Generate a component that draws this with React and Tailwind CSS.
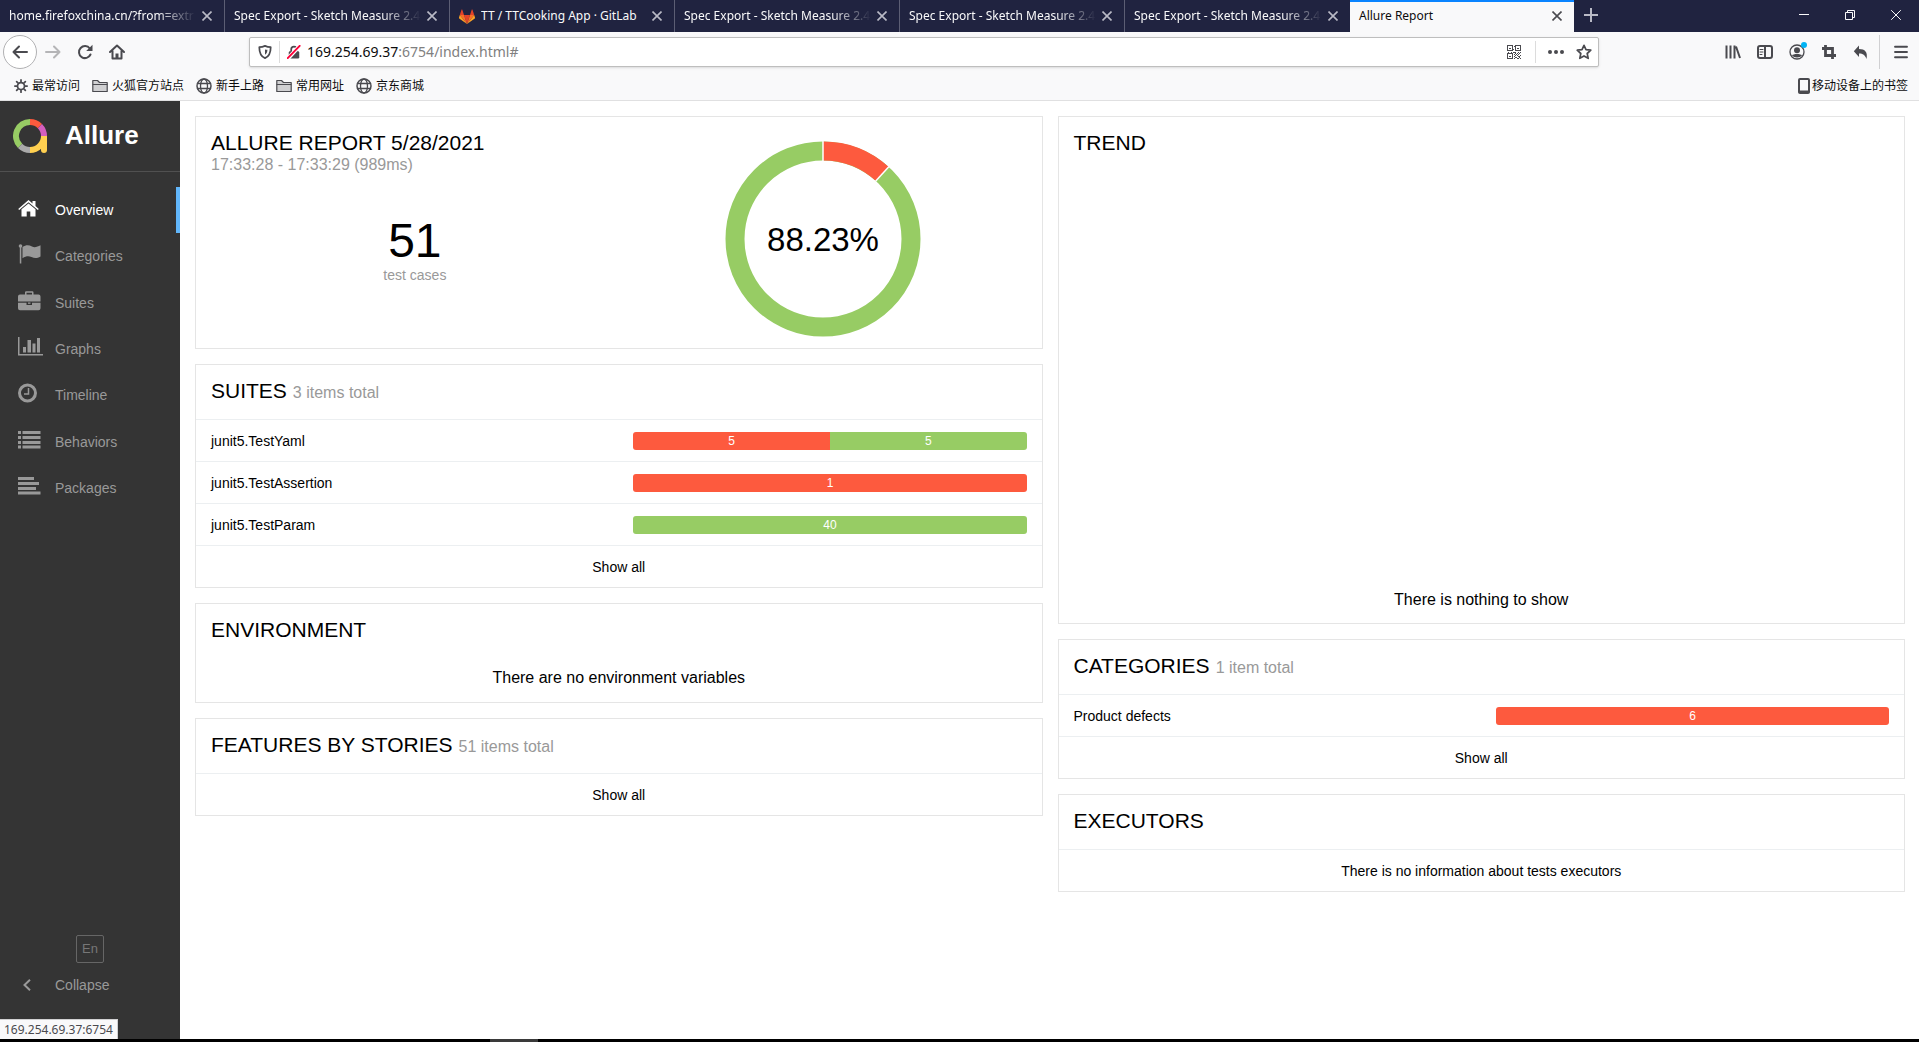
import { Menu } from "lucide-react";

const RED = "bg-[#fd5a3e]";
const GREEN = "bg-[#97cc64]";

/* ---------- browser window ---------- */

function Close({ className }) {
  return (
    <svg width="10" height="10" viewBox="0 0 10 10" className={className} stroke="currentColor" strokeWidth="1.6" fill="none">
      <path d="M0.5 0.5 9.5 9.5M9.5 0.5 0.5 9.5" />
    </svg>
  );
}

function GitLab() {
  return (
    <svg width="16" height="15" viewBox="0 0 16 15" className="shrink-0">
      <path d="M8 15 11 6H5z" fill="#e24329" />
      <path d="M8 15 5 6H0.8z" fill="#fc6d26" />
      <path d="M0.8 6 0 8.6c-.1.3 0 .6.2.8L8 15z" fill="#fca326" />
      <path d="M0.8 6H5L3.2 0.6c-.1-.3-.5-.3-.6 0z" fill="#e24329" />
      <path d="M8 15 11 6h4.200z" fill="#fc6d26" />
      <path d="M15.200 6 16 8.600c.1.3 0 .6-.2.8L8 15z" fill="#fca326" />
      <path d="M15.200 6H11L12.800.6c.1-.3.5-.3.6 0z" fill="#e24329" />
    </svg>
  );
}

const tabs = [
  { title: "home.firefoxchina.cn/?from=extr" },
  { title: "Spec Export - Sketch Measure 2.4" },
  { title: "TT / TTCooking App · GitLab", icon: true },
  { title: "Spec Export - Sketch Measure 2.4" },
  { title: "Spec Export - Sketch Measure 2.4" },
  { title: "Spec Export - Sketch Measure 2.4" },
];

function TabBar() {
  return (
    <div className="flex h-8 bg-[#202340] text-xs text-[#f9f9fa]">
      {tabs.map((t, i) => (
        <div key={i} className={`flex w-[225px] items-center gap-1.5 pl-[9px] pr-3 ${i < 5 ? "border-r border-[#5c5e74]" : ""}`}>
          {t.icon && <GitLab />}
          <button className={`min-w-0 flex-1 overflow-hidden text-left whitespace-nowrap ${t.icon ? "" : "[mask-image:linear-gradient(to_left,transparent,black_40px)]"}`}>{t.title}</button>
          <button aria-label="Close tab" className="text-[#b9bac6]"><Close /></button>
        </div>
      ))}
      <div className="flex w-[224px] items-center border-t-2 border-[#0a84ff] bg-[#f9f9fa] pr-3 pb-0.5 pl-[9px] text-[#0c0c0d]">
        <button className="flex-1 text-left">Allure Report</button>
        <button aria-label="Close tab" className="text-[#4a4a4f]"><Close /></button>
      </div>
      <button aria-label="New tab" className="flex w-[34px] items-center justify-center pb-0.5 text-[#b9bac6]">
        <svg width="14" height="14" viewBox="0 0 14 14" stroke="currentColor" strokeWidth="2"><path d="M7 0V14M0 7H14" /></svg>
      </button>
      <div className="ml-auto flex pb-0.5">
        <button aria-label="Minimize" className="flex w-[46px] items-center justify-center">
          <svg width="10" height="10" viewBox="0 0 10 10" stroke="currentColor"><path d="M0 4.500H10" /></svg>
        </button>
        <button aria-label="Restore" className="flex w-[46px] items-center justify-center">
          <svg width="10" height="10" viewBox="0 0 10 10" stroke="currentColor" fill="none"><path d="M.5 2.500H7.500V9.500H.5zM2.500 2.500V.5H9.500V7.500H7.500" /></svg>
        </button>
        <button aria-label="Close window" className="flex w-[46px] items-center justify-center">
          <svg width="10" height="10" viewBox="0 0 10 10" stroke="currentColor" fill="none"><path d="M.2.2 9.800 9.800M9.800.2.2 9.800" /></svg>
        </button>
      </div>
    </div>
  );
}

function Icon({ children, size = 16, className = "" }) {
  return (
    <svg width={size} height={size} viewBox="0 0 16 16" className={`shrink-0 ${className}`} fill="none" stroke="currentColor" strokeWidth="2" strokeLinecap="round" strokeLinejoin="round">
      {children}
    </svg>
  );
}

function QrCode() {
  return (
    <svg width="14" height="14" viewBox="0 0 14 14" fill="none" stroke="currentColor" shapeRendering="crispEdges">
      <path d="M1.500 .5H5.500V5.500H.5V.5zM8.500 .5H13.500V5.500H8.500zM.5 8.500H5.500V13.500H.5z" />
      <path d="M2 3.500H4M10 3.500H12M2 11.500H4M7 1.500H8M6 4.500H7M6 7.500H9M1 7.500H2M4 7.500H5M11 7.500H12M13 7.500H14M8 8.500H9M10 8.500H11M12 8.500H13M7 9.500H8M9 9.500H10M11 9.500H12M8 10.500H9M10 10.500H11M13 10.500H14M7 11.500H8M11 11.500H13M8 12.500H10M12 12.500H13M7 13.500H8M10 13.500H12M13 13.500H14" />
    </svg>
  );
}

function ToolBar() {
  return (
    <div className="flex h-10 items-center bg-[#f9f9fa] pr-1 pl-[3px] text-[#4a4a4f]">
      <button aria-label="Back" className="flex size-[34px] items-center justify-center rounded-full border border-[#b1b1b3] bg-white">
        <Icon><path d="M15 8H1.500M7 2.500 1.500 8 7 13.500" /></Icon>
      </button>
      <button aria-label="Forward" className="ml-2 text-[#b5b5b7]"><Icon><path d="M1 8H14.500M9 2.500 14.500 8 9 13.500" /></Icon></button>
      <button aria-label="Reload" className="ml-4"><Icon><path d="M13.500 10.500A6 6 0 1 1 12.800 4.500" /><path d="M15.500 .8V7H9.200z" fill="currentColor" stroke="none" /></Icon></button>
      <button aria-label="Home" className="ml-4"><Icon><path d="M1 8 8 1.500 15 8M3.500 7V14.500H12.500V7" /><path d="M8 14V9.500" strokeWidth="3" strokeLinecap="butt" /></Icon></button>
      <div className="ml-[124px] flex h-[30px] w-[1350px] items-center rounded-xs border border-[#bebebe] bg-white shadow-sm">
        <Icon size={14} className="ml-2"><path d="M8 1C10 2 12.500 2.500 14.500 2.500 14.500 9 13 13 8 15 3 13 1.500 9 1.500 2.500 3.500 2.500 6 2 8 1z" /><path d="M8 5C9 5.300 10 5.500 10.800 5.500 10.500 8.500 10 10 8 11z" fill="currentColor" stroke="none" /></Icon>
        <div className="mr-[7px] ml-[7px] h-[22px] w-px bg-[#dcdcdc]" />
        <Icon size={14}><path d="M4.800 7V5A3.200 3.200 0 0 1 11.200 5V7" /><rect x="2" y="7" width="12" height="8.500" rx="1.500" fill="currentColor" stroke="none" /><path d="M1 15.500 14.500 1" stroke="#fff" strokeWidth="4.500" /><path d="M.8 15 14.500 1" stroke="#ff0039" strokeWidth="2.200" /></Icon>
        <div className="relative ml-1.5 flex-1 text-sm">
          <span className="text-[#0c0c0d]">169.254.69.37</span><span className="text-[#808080]">:6754/index.html#</span>
          <input aria-label="Address" className="absolute inset-0 w-full bg-transparent outline-none" />
        </div>
        <QrCode />
        <div className="mr-3 ml-3.5 h-[22px] w-px bg-[#dcdcdc]" />
        <Icon><g fill="currentColor" stroke="none"><circle cx="2" cy="8" r="2" /><circle cx="8" cy="8" r="2" /><circle cx="14" cy="8" r="2" /></g></Icon>
        <Icon className="mr-1.5 ml-3"><path d="M8 1.300 10 5.700 14.800 6.200 11.200 9.500 12.200 14.300 8 11.900 3.800 14.300 4.800 9.500 1.200 6.200 6 5.700z" strokeWidth="1.700" /></Icon>
      </div>
      <div className="ml-auto flex items-center">
        <div className="flex gap-4">
          <button aria-label="Library"><Icon><path d="M1.500 1.500V14.500M5.500 1.500V14.500M9.500 1.500V14.500M11 2.500 15 14" strokeLinecap="butt" /></Icon></button>
          <button aria-label="Sidebar"><Icon><rect x="1" y="2" width="14" height="12" rx="2" /><path d="M8 2V14" /><path d="M3 5.500H6M3 8H6M3 10.500H5" strokeWidth="1" /></Icon></button>
          <button aria-label="Account" className="relative">
            <Icon><circle cx="8" cy="8" r="7" strokeWidth="1.300" /><circle cx="8" cy="6.200" r="3" fill="currentColor" stroke="none" /><path d="M3 11.500C4 9.500 12 9.500 13 11.500 11 14 5 14 3 11.500z" fill="currentColor" stroke="none" /></Icon>
            <span className="absolute -top-0.5 -right-0.5 size-1.5 rounded-full bg-[#00b3f4]" />
          </button>
          <button aria-label="Screenshot"><Icon><path d="M4.500 1V11.500H15M1 4.500H11.500V15" strokeWidth="2.800" strokeLinecap="butt" strokeLinejoin="miter" /></Icon></button>
          <button aria-label="Undo"><Icon><path d="M6 1.500V5C12 5 15 8 13.500 15 12 11 10 9.500 6 9.500V13L.8 7.200z" fill="currentColor" stroke="none" /></Icon></button>
        </div>
        <div className="mr-3 ml-2.5 h-[34px] w-px bg-[#d0d0d2]" />
        <button aria-label="Menu" className="pr-[5px]"><Menu size={18} strokeWidth={2.500} /></button>
      </div>
    </div>
  );
}

function Gear() {
  return <Icon size={14}><circle cx="8" cy="8" r="4" /><path d="M8 1V3M8 13V15M1 8H3M13 8H15M3 3 4.500 4.500M11.500 11.500 13 13M13 3 11.500 4.500M4.500 11.500 3 13" /></Icon>;
}
function Folder() {
  return <Icon><path d="M.8 13.500V2.500H5.500L7.500 4.500H15.200V13.500z" fill="#d0d0d2" strokeWidth="1.200" /><path d="M1 6.500H15" strokeWidth="1" /></Icon>;
}
function Globe() {
  return <Icon><circle cx="8" cy="8" r="7" strokeWidth="1.500" /><ellipse cx="8" cy="8" rx="3.500" ry="7" strokeWidth="1.300" /><path d="M1.500 5.500H14.500M1.500 10.500H14.500" strokeWidth="1.300" /></Icon>;
}

const bookmarks = [
  ["最常访问", Gear],
  ["火狐官方站点", Folder],
  ["新手上路", Globe],
  ["常用网址", Folder],
  ["京东商城", Globe],
];

function BookmarkBar() {
  return (
    <div className="flex h-[29px] items-center gap-3 border-b border-[#e0e0e1] bg-[#f9f9fa] pr-[11px] pl-3.5 text-xs text-[#0c0c0d]">
      {bookmarks.map(([name, I]) => (
        <button key={name} className="flex items-center gap-1"><span className="text-[#4a4a4f]"><I /></span>{name}</button>
      ))}
      <button className="ml-auto flex items-center">
        <Icon className="text-[#4a4a4f]"><rect x="3" y="1" width="10" height="14" rx="1" /><path d="M3 13.500H13" /></Icon>
        移动设备上的书签
      </button>
    </div>
  );
}

/* ---------- report navigation ---------- */

function Logo() {
  return (
    <svg width="34" height="34" viewBox="0 0 34 34" fill="none" strokeWidth="6">
      <path d="M17 3A14 14 0 0 1 26.900 7.100" stroke="#fd5a3e" />
      <path d="M26.900 7.100A14 14 0 0 1 31 17" stroke="#d35ebe" />
      <path d="M7.100 26.900A14 14 0 0 1 17 3" stroke="#97cc64" />
      <path d="M17 31A14 14 0 0 1 7.100 26.900" stroke="#aaaaaa" />
      <path d="M31 17A14 14 0 0 1 17 31" stroke="#ffd050" />
      <path d="M28 17H34V31A3 3 0 0 1 28 31z" fill="#ffd050" />
    </svg>
  );
}

function House() {
  return (
    <svg width="21" height="17" viewBox="0 0 21 17" fill="currentColor">
      <path d="M10.500 0 14.500 3.500V1H17.500V6L20.800 9 19.800 10 10.500 2.200 1.200 10 .2 9z" />
      <path d="M10.500 3.500 17.500 9.300V16.500H12.300V11.500H8.700V16.500H3.500V9.300z" />
    </svg>
  );
}
function Flag() {
  return (
    <svg width="23" height="20" viewBox="0 0 23 20" fill="currentColor">
      <circle cx="2.500" cy="2" r="1.800" />
      <path d="M1.800 3H3.300V19.500H1.800z" />
      <path d="M4.500 3C8 .8 11 1 14 2.600 17 4 19.500 2.600 22.500 1.300V12.500C19 14.500 16.500 14.500 13.500 13 10.500 11.700 8 12 4.500 14.200z" />
    </svg>
  );
}
function Briefcase() {
  return (
    <svg width="23" height="20" viewBox="0 0 23 20" fill="currentColor">
      <path d="M7 3.500V1.500A1.200 1.200 0 0 1 8.200.3H14.300A1.200 1.200 0 0 1 15.500 1.500V3.500H20.500A2 2 0 0 1 22.500 5.500V10.500H0V5.500A2 2 0 0 1 2 3.500zM8.500 3.500H14V1.800H8.500z" fillRule="evenodd" />
      <path d="M0 11.700H8.500V14H14V11.700H22.500V17.300A2 2 0 0 1 20.500 19.300H2A2 2 0 0 1 0 17.300z" />
      <path d="M10 11.500H12.500V12.800H10z" />
    </svg>
  );
}
function BarChart() {
  return <svg width="26" height="19" viewBox="0 0 26 19" fill="currentColor"><path d="M0 0H1.500V17H25V18.500H0zM5 10H8V15.500H5zM9.500 3H13V15.500H9.500zM14.500 6.500H17.500V15.500H14.500zM19 1H22V15.500H19z" /></svg>;
}
function Clock() {
  return <svg width="20" height="20" viewBox="0 0 20 20" fill="none" stroke="currentColor"><circle cx="9.500" cy="10" r="8" strokeWidth="3" /><path d="M10.500 5V11H6" strokeWidth="1.500" /></svg>;
}
function ListRows() {
  return <svg width="23" height="18" viewBox="0 0 23 18" fill="currentColor"><path d="M0 0H3V3H0zM0 5H3V8H0zM0 10H3V13H0zM0 14.500H3V17.500H0zM4.500 0H22.500V3H4.500zM4.500 5H22.500V8H4.500zM4.500 10H22.500V13H4.500zM4.500 14.500H22.500V17.500H4.500z" /></svg>;
}
function AlignLeft() {
  return <svg width="23" height="18" viewBox="0 0 23 18" fill="currentColor"><path d="M0 0H16V3H0zM0 5H21V8H0zM0 10H18V13H0zM0 14.500H22.500V17.500H0z" /></svg>;
}

const nav = [
  ["Overview", House],
  ["Categories", Flag],
  ["Suites", Briefcase],
  ["Graphs", BarChart],
  ["Timeline", Clock],
  ["Behaviors", ListRows],
  ["Packages", AlignLeft],
];

function SideBar() {
  return (
    <aside className="flex w-[180px] shrink-0 flex-col bg-[#343434] text-sm text-[#999]">
      <a href="#" className="flex h-[71px] items-center gap-[18px] border-b border-[#505050] pl-[13px] text-[26px] font-bold text-white"><Logo />Allure</a>
      <nav className="mt-[15px] flex h-[324px] flex-col justify-between">
        {nav.map(([name, I], i) => (
          <a key={name} href="#" className={`flex h-[46px] items-center pl-[18px] ${i === 0 ? "border-r-4 border-[#61b6fb] text-white" : ""}`}>
            <span className="flex w-[37px] pb-1"><I /></span>{name}
          </a>
        ))}
      </nav>
      <div className="mt-auto flex flex-col pb-10">
        <button className="h-7 w-7 self-center rounded-xs border border-[#666] text-[13px] text-[#777]">En</button>
        <button className="mt-2 flex h-7 items-center pl-[23px]">
          <svg width="8" height="12" viewBox="0 0 8 12" fill="none" stroke="currentColor" strokeWidth="2" className="mr-6"><path d="M7 .8 1.500 6 7 11.200" /></svg>
          Collapse
        </button>
      </div>
    </aside>
  );
}

/* ---------- widgets ---------- */

function Card({ title, note, children }) {
  return (
    <section className="flex flex-col border border-[#e5e5e5] bg-white">
      <h2 className="flex items-baseline gap-1.5 px-[15px] pt-3 pb-3.5 text-[21px] leading-7">
        {title}
        {note && <small className="text-base leading-4 text-[#999]">{note}</small>}
      </h2>
      {children}
    </section>
  );
}

function Row({ name, parts }) {
  const total = parts.reduce((s, p) => s + p[0], 0);
  return (
    <div className="flex h-[42px] items-center border-t border-[#eceff1] px-[15px] text-sm">
      <a href="#" className="flex-1">{name}</a>
      <div className="mt-px flex h-[18px] w-[48.2%] overflow-hidden rounded-[3px] text-center text-xs leading-[18px] text-white">
        {parts.map(([n, color], i) => <div key={i} className={color} style={{ width: `${(n / total) * 100}%` }}>{n}</div>)}
      </div>
    </div>
  );
}

function Footer({ children, link }) {
  return (
    <div className="flex h-[42px] items-center justify-center border-t border-[#eceff1] text-sm">
      {link ? <a href="#">{children}</a> : children}
    </div>
  );
}

function Donut() {
  const c = 2 * Math.PI * 88;
  const failed = (c * 6) / 51;
  return (
    <svg width="196" height="196" viewBox="0 0 196 196" fill="none" role="img" aria-label="88.23% passed">
      <g transform="rotate(-90 98 98)" strokeWidth="19">
        <circle cx="98" cy="98" r="88" stroke="#97cc64" />
        <circle cx="98" cy="98" r="88" stroke="#fd5a3e" strokeDasharray={`${failed} ${c}`} />
      </g>
      <g stroke="#fff" strokeWidth="1.500">
        <path d="M98 0V20" />
        <path d="M98 0V20" transform="rotate(42.350 98 98)" />
      </g>
      <text x="98" y="110" textAnchor="middle" fontSize="33" fill="#000">88.23%</text>
    </svg>
  );
}

function Overview() {
  return (
    <main className="grid flex-1 grid-cols-2 items-start gap-[15px] bg-white pt-[15px] pr-3.5 pl-[15px] text-black">
      <div className="flex flex-col gap-[15px]">
        <section className="flex border border-[#e5e5e5] px-[15px] pt-3 pb-[11px]">
          <div className="flex-1">
            <h2 className="text-[21px] leading-7">ALLURE REPORT 5/28/2021</h2>
            <p className="text-base leading-4 text-[#999]">17:33:28 - 17:33:29 (989ms)</p>
            <div className="mt-11 text-center">
              <div className="text-5xl leading-[48px]">51</div>
              <div className="text-sm text-[#999]">test cases</div>
            </div>
          </div>
          <div className="flex flex-1 justify-center pt-3"><Donut /></div>
        </section>
        <Card title="SUITES" note="3 items total">
          <Row name="junit5.TestYaml" parts={[[5, RED], [5, GREEN]]} />
          <Row name="junit5.TestAssertion" parts={[[1, RED]]} />
          <Row name="junit5.TestParam" parts={[[40, GREEN]]} />
          <Footer link>Show all</Footer>
        </Card>
        <Card title="ENVIRONMENT">
          <p className="pt-2 pb-3 text-center text-base">There are no environment variables</p>
        </Card>
        <Card title="FEATURES BY STORIES" note="51 items total"><Footer link>Show all</Footer></Card>
      </div>
      <div className="flex flex-col gap-[15px]">
        <Card title="TREND">
          <p className="pt-[417px] pb-[11px] text-center text-base">There is nothing to show</p>
        </Card>
        <Card title="CATEGORIES" note="1 item total">
          <Row name="Product defects" parts={[[6, RED]]} />
          <Footer link>Show all</Footer>
        </Card>
        <Card title="EXECUTORS"><Footer>There is no information about tests executors</Footer></Card>
      </div>
    </main>
  );
}

export default function App() {
  return (
    <div className="flex min-h-screen flex-col font-['Noto_Sans','Noto_Sans_CJK_SC',sans-serif]">
      <header><TabBar /><ToolBar /><BookmarkBar /></header>
      <div className="relative flex flex-1 font-['Liberation_Sans',Arial,sans-serif]">
        <SideBar />
        <Overview />
        <div className="absolute bottom-0 left-0 h-5 border-t border-r border-[#d0d0d2] bg-[#f9f9fa] px-1 font-['Noto_Sans',sans-serif] text-xs leading-[19px] text-[#4a4a4f]">169.254.69.37:6754</div>
      </div>
      <div className="h-[3px] bg-black pl-[490px]"><div className="h-full w-12 bg-[#3a3a3a]" /></div>
    </div>
  );
}
